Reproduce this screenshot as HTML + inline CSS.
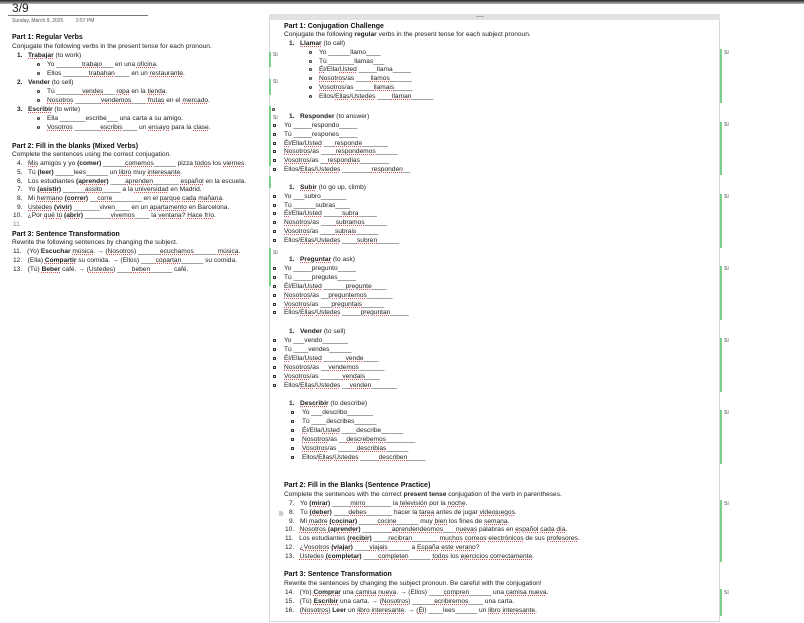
<!DOCTYPE html>
<html><head><meta charset="utf-8"><style>
*{margin:0;padding:0;box-sizing:border-box}
body{width:804px;height:623px;background:#fff;position:relative;overflow:hidden;font-family:"Liberation Sans",sans-serif;color:#222}
.l{position:absolute;font-size:6.6px;line-height:8px;white-space:nowrap}
.h{font-weight:bold;font-size:7px;color:#111}
.b{font-weight:bold}
.sp{text-decoration:underline dotted #e05050;text-decoration-thickness:1px;text-underline-offset:1px}
.bu{position:absolute;width:3px;height:3px;border:1px solid #333;border-radius:50%}
.sq{position:absolute;width:3px;height:3px;border:1px solid #333}
.g{position:absolute;width:2px;background:#7ccf8a}
.si{position:absolute;font-size:5px;color:#444;line-height:6px}
</style></head><body>
<div style="position:absolute;left:0;top:0;width:804px;height:4px;background:linear-gradient(#222,#bbb)"></div>
<div style="position:absolute;left:12px;top:2px;font-size:12px;line-height:13px;color:#222">3/9</div>
<div style="position:absolute;left:8px;top:15px;width:140px;height:1px;background:#777"></div>
<div class="l" style="left:12px;top:17px;font-size:5px;color:#555">Sunday, March 9, 2025 &nbsp; &nbsp; &nbsp; &nbsp; 2:57 PM</div>

<!-- Left column -->
<div class="l h" style="left:12px;top:34px">Part 1: Regular Verbs</div>
<div class="l" style="left:12px;top:43px">Conjugate the following verbs in the present tense for each pronoun.</div>
<div class="l" style="left:17px;top:52px"><b>1.</b>&nbsp;&nbsp;&nbsp;<b class="sp">Trabajar</b> (to work)</div>
<div class="bu" style="left:37px;top:63px"></div><div class="l" style="left:47px;top:61px">Yo _______<span class="sp">trabajo</span>___ en una <span class="sp">oficina</span>.</div>
<div class="bu" style="left:37px;top:72px"></div><div class="l" style="left:47px;top:70px">Ellos _______<span class="sp">trabahan</span>____ en un <span class="sp">restaurante</span>.</div>
<div class="l" style="left:17px;top:79px"><b>2.</b>&nbsp;&nbsp;&nbsp;<b>Vender</b> (to sell)</div>
<div class="bu" style="left:37px;top:90px"></div><div class="l" style="left:47px;top:88px">Tú _______<span class="sp">vendes</span>___ <span class="sp">ropa</span> en la <span class="sp">tienda</span>.</div>
<div class="bu" style="left:37px;top:99px"></div><div class="l" style="left:47px;top:97px"><span class="sp">Nosotros</span> _______<span class="sp">vendemos</span>____ <span class="sp">frutas</span> en el <span class="sp">mercado</span>.</div>
<div class="l" style="left:17px;top:106px"><b>3.</b>&nbsp;&nbsp;&nbsp;<b class="sp">Escribir</b> (to write)</div>
<div class="bu" style="left:37px;top:117px"></div><div class="l" style="left:47px;top:115px">Ella _______escribe___ una carta a su amigo.</div>
<div class="bu" style="left:37px;top:126px"></div><div class="l" style="left:47px;top:124px"><span class="sp">Vosotros</span> _______<span class="sp">escribis</span>____ un <span class="sp">ensayo</span> para la <span class="sp">clase</span>.</div>

<div class="l h" style="left:12px;top:143px">Part 2: Fill in the blanks (Mixed Verbs)</div>
<div class="l" style="left:12px;top:151px">Complete the sentences using the correct conjugation.</div>
<div class="l" style="left:17px;top:160px">4.&nbsp;&nbsp;&nbsp;<span class="sp">Mis</span> amigos y yo <b>(comer)</b> ______<span class="sp">comemos</span>______ pizza <span class="sp">todos</span> los <span class="sp">viernes</span>.</div>
<div class="l" style="left:17px;top:169px">5.&nbsp;&nbsp;&nbsp;Tú <b>(leer)</b> _____lees______ un <span class="sp">libro</span> muy <span class="sp">interesante</span>.</div>
<div class="l" style="left:17px;top:178px">6.&nbsp;&nbsp;&nbsp;Los estudiantes <b class="sp">(aprender)</b> ____<span class="sp">aprenden</span>_______ <span class="sp">español</span> en la escuela.</div>
<div class="l" style="left:17px;top:186px">7.&nbsp;&nbsp;&nbsp;Yo <b class="sp">(asistir)</b> ______<span class="sp">assito</span>_____ a la <span class="sp">universidad</span> en Madrid.</div>
<div class="l" style="left:17px;top:195px">8.&nbsp;&nbsp;&nbsp;Mi <span class="sp">hermano</span> <b class="sp">(correr)</b> __<span class="sp">corre</span>________ en el <span class="sp">parque</span> <span class="sp">cada</span> <span class="sp">mañana</span>.</div>
<div class="l" style="left:17px;top:204px">9.&nbsp;&nbsp;&nbsp;<span class="sp">Ustedes</span> <b class="sp">(vivir)</b> _______viven____ en un <span class="sp">apartamento</span> en Barcelona.</div>
<div class="l" style="left:13px;top:212px">10.&nbsp;&nbsp;&nbsp;¿Por <span class="sp">qué</span> <span class="sp">tú</span> <b class="sp">(abrir)</b> _______<span class="sp">vivemos</span>____ la <span class="sp">ventana</span>? <span class="sp">Hace</span> <span class="sp">frío</span>.</div>
<div class="l" style="left:13px;top:221px;color:#888">11.</div>
<div class="l h" style="left:12px;top:231px">Part 3: Sentence Transformation</div>
<div class="l" style="left:12px;top:239px">Rewrite the following sentences by changing the subject.</div>
<div class="l" style="left:13px;top:248px">11.&nbsp;&nbsp;&nbsp;(Yo) <b>Escuchar</b> <span class="sp">música</span>. → (<span class="sp">Nosotros</span>) ______<span class="sp">ecuchamos</span>______ <span class="sp">música</span>.</div>
<div class="l" style="left:13px;top:257px">12.&nbsp;&nbsp;&nbsp;(Ella) <b class="sp">Compartir</b> su comida. → (Ellos) ____<span class="sp">copartan</span>______ su comida.</div>
<div class="l" style="left:13px;top:266px">13.&nbsp;&nbsp;&nbsp;(Tú) <b class="sp">Beber</b> café. → (<span class="sp">Ustedes</span>) ____<span class="sp">beben</span>______ café.</div>

<!-- Right panel -->
<div style="position:absolute;left:269px;top:14px;width:451px;height:608px;border-left:1px solid #d8d8d8;border-right:1px solid #d8d8d8;border-bottom:1px solid #d8d8d8"></div>
<div style="position:absolute;left:269px;top:14px;width:451px;height:6px;background:#e2e2e2"></div>
<div style="position:absolute;left:476px;top:16px;width:8px;height:1px;background:#aaa"></div>

<div class="l h" style="left:284px;top:23px">Part 1: Conjugation Challenge</div>
<div class="l" style="left:284px;top:31px">Conjugate the following <b>regular</b> verbs in the present tense for each subject pronoun.</div>
<div class="l" style="left:289px;top:40px"><b>1.</b>&nbsp;&nbsp;&nbsp;<b class="sp">Llamar</b> (to call)</div>
<div class="bu" style="left:309px;top:51px"></div><div class="l" style="left:319px;top:49px">Yo ______llamo____</div>
<div class="bu" style="left:309px;top:60px"></div><div class="l" style="left:319px;top:58px">Tú _______llamas___</div>
<div class="bu" style="left:309px;top:68px"></div><div class="l" style="left:319px;top:66px"><span class="sp">Él</span>/Ella/<span class="sp">Usted</span> _____llama_____</div>
<div class="bu" style="left:309px;top:77px"></div><div class="l" style="left:319px;top:75px"><span class="sp">Nosotros</span>/as ____<span class="sp">llamos</span>______</div>
<div class="bu" style="left:309px;top:86px"></div><div class="l" style="left:319px;top:84px"><span class="sp">Vosotros</span>/as _____<span class="sp">llamais</span>_____</div>
<div class="bu" style="left:309px;top:95px"></div><div class="l" style="left:319px;top:93px">Ellos/<span class="sp">Ellas</span>/<span class="sp">Ustedes</span> ____<span class="sp">llaman</span>______</div>
<div class="bu" style="left:272px;top:108px"></div>

<div class="l" style="left:289px;top:113px"><b>1.</b>&nbsp;&nbsp;&nbsp;<b>Responder</b> (to answer)</div>
<div class="sq" style="left:273px;top:124px"></div><div class="l" style="left:284px;top:122px">Yo _____respondo_____</div>
<div class="sq" style="left:273px;top:133px"></div><div class="l" style="left:284px;top:131px">Tú _____respones_____</div>
<div class="sq" style="left:273px;top:142px"></div><div class="l" style="left:284px;top:140px"><span class="sp">Él</span>/Ella/<span class="sp">Usted</span> ___<span class="sp">responde</span>_______</div>
<div class="sq" style="left:273px;top:150px"></div><div class="l" style="left:284px;top:148px"><span class="sp">Nosotros</span>/as ____<span class="sp">respondemos</span>______</div>
<div class="sq" style="left:273px;top:159px"></div><div class="l" style="left:284px;top:157px"><span class="sp">Vosotros</span>/as __<span class="sp">respondias</span>________</div>
<div class="sq" style="left:273px;top:168px"></div><div class="l" style="left:284px;top:166px">Ellos/<span class="sp">Ellas</span>/<span class="sp">Ustedes</span> ________<span class="sp">responden</span>__</div>

<div class="l" style="left:289px;top:184px"><b>1.</b>&nbsp;&nbsp;&nbsp;<b class="sp">Subir</b> (to go up, climb)</div>
<div class="sq" style="left:273px;top:195px"></div><div class="l" style="left:284px;top:193px">Yo ___subro_______</div>
<div class="sq" style="left:273px;top:204px"></div><div class="l" style="left:284px;top:202px">Tú ______subras____</div>
<div class="sq" style="left:273px;top:212px"></div><div class="l" style="left:284px;top:210px"><span class="sp">Él</span>/Ella/<span class="sp">Usted</span> _____<span class="sp">subra</span>_____</div>
<div class="sq" style="left:273px;top:221px"></div><div class="l" style="left:284px;top:219px"><span class="sp">Nosotros</span>/as ____<span class="sp">subramos</span>______</div>
<div class="sq" style="left:273px;top:230px"></div><div class="l" style="left:284px;top:228px"><span class="sp">Vosotros</span>/as ____<span class="sp">subrais</span>______</div>
<div class="sq" style="left:273px;top:239px"></div><div class="l" style="left:284px;top:237px">Ellos/<span class="sp">Ellas</span>/<span class="sp">Ustedes</span> ____<span class="sp">subren</span>______</div>

<div class="l" style="left:289px;top:256px"><b>1.</b>&nbsp;&nbsp;&nbsp;<b class="sp">Preguntar</b> (to ask)</div>
<div class="sq" style="left:273px;top:267px"></div><div class="l" style="left:284px;top:265px">Yo _____pregunto_____</div>
<div class="sq" style="left:273px;top:276px"></div><div class="l" style="left:284px;top:274px">Tú _____pregutes_____</div>
<div class="sq" style="left:273px;top:285px"></div><div class="l" style="left:284px;top:283px"><span class="sp">Él</span>/Ella/<span class="sp">Usted</span> ______<span class="sp">pregunte</span>____</div>
<div class="sq" style="left:273px;top:294px"></div><div class="l" style="left:284px;top:292px"><span class="sp">Nosotros</span>/as __<span class="sp">preguntemos</span>_______</div>
<div class="sq" style="left:273px;top:303px"></div><div class="l" style="left:284px;top:301px"><span class="sp">Vosotros</span>/as ___<span class="sp">preguntais</span>______</div>
<div class="sq" style="left:273px;top:311px"></div><div class="l" style="left:284px;top:309px">Ellos/<span class="sp">Ellas</span>/<span class="sp">Ustedes</span> _____<span class="sp">preguntan</span>_____</div>

<div class="l" style="left:289px;top:328px"><b>1.</b>&nbsp;&nbsp;&nbsp;<b>Vender</b> (to sell)</div>
<div class="sq" style="left:273px;top:339px"></div><div class="l" style="left:284px;top:337px">Yo ___vendo_______</div>
<div class="sq" style="left:273px;top:348px"></div><div class="l" style="left:284px;top:346px">Tú ____vendes______</div>
<div class="sq" style="left:273px;top:357px"></div><div class="l" style="left:284px;top:355px"><span class="sp">Él</span>/Ella/<span class="sp">Usted</span> ______<span class="sp">vende</span>____</div>
<div class="sq" style="left:273px;top:366px"></div><div class="l" style="left:284px;top:364px"><span class="sp">Nosotros</span>/as __<span class="sp">vendemos</span>_______</div>
<div class="sq" style="left:273px;top:375px"></div><div class="l" style="left:284px;top:373px"><span class="sp">Vosotros</span>/as ______<span class="sp">vendais</span>____</div>
<div class="sq" style="left:273px;top:384px"></div><div class="l" style="left:284px;top:382px">Ellos/<span class="sp">Ellas</span>/<span class="sp">Ustedes</span> __<span class="sp">venden</span>_______</div>

<div class="l" style="left:289px;top:400px"><b>1.</b>&nbsp;&nbsp;&nbsp;<b class="sp">Describir</b> (to describe)</div>
<div class="sq" style="left:291px;top:411px"></div><div class="l" style="left:302px;top:409px">Yo ___describo_______</div>
<div class="sq" style="left:291px;top:420px"></div><div class="l" style="left:302px;top:418px">Tú ____describes______</div>
<div class="sq" style="left:291px;top:429px"></div><div class="l" style="left:302px;top:427px"><span class="sp">Él</span>/Ella/<span class="sp">Usted</span> ____describe______</div>
<div class="sq" style="left:291px;top:438px"></div><div class="l" style="left:302px;top:436px"><span class="sp">Nosotros</span>/as __<span class="sp">descrebemos</span>________</div>
<div class="sq" style="left:291px;top:447px"></div><div class="l" style="left:302px;top:445px"><span class="sp">Vosotros</span>/as _____<span class="sp">describias</span>______</div>
<div class="sq" style="left:291px;top:456px"></div><div class="l" style="left:302px;top:454px">Ellos/<span class="sp">Ellas</span>/<span class="sp">Ustedes</span> _____<span class="sp">describen</span>_____</div>

<div class="l h" style="left:284px;top:482px">Part 2: Fill in the Blanks (Sentence Practice)</div>
<div class="l" style="left:284px;top:491px">Complete the sentences with the correct <b>present tense</b> conjugation of the verb in parentheses.</div>
<div class="l" style="left:289px;top:500px">7.&nbsp;&nbsp;&nbsp;Yo <b class="sp">(mirar)</b> _____<span class="sp">mirro</span>_______ la <span class="sp">televisión</span> por la <span class="sp">noche</span>.</div>
<div style="position:absolute;left:279px;top:511px;width:5px;height:5px;background:#ccc;clip-path:polygon(0 0,60% 0,100% 50%,60% 100%,0 100%)"></div>
<div class="l" style="left:289px;top:509px">8.&nbsp;&nbsp;&nbsp;Tú <b class="sp">(deber)</b> ____<span class="sp">debes</span>_______ hacer la <span class="sp">tarea</span> antes de jugar <span class="sp">videojuegos</span>.</div>
<div class="l" style="left:289px;top:518px">9.&nbsp;&nbsp;&nbsp;Mi <span class="sp">madre</span> <b class="sp">(cocinar)</b> _____<span class="sp">cocine</span>______ muy <span class="sp">bien</span> los fines de <span class="sp">semana</span>.</div>
<div class="l" style="left:285px;top:526px">10.&nbsp;&nbsp;&nbsp;<span class="sp">Nosotros</span> <b class="sp">(aprender)</b> ________<span class="sp">aprendendeomos</span>___ <span class="sp">nuevas</span> palabras en <span class="sp">español</span> <span class="sp">cada</span> <span class="sp">día</span>.</div>
<div class="l" style="left:285px;top:535px">11.&nbsp;&nbsp;&nbsp;Los estudiantes <b class="sp">(recibir)</b> ____<span class="sp">recibran</span>_______ <span class="sp">muchos</span> <span class="sp">correos</span> <span class="sp">electrónicos</span> de sus <span class="sp">profesores</span>.</div>
<div class="l" style="left:285px;top:544px">12.&nbsp;&nbsp;&nbsp;¿<span class="sp">Vosotros</span> <b class="sp">(viajar)</b> ____<span class="sp">viajais</span>______ a <span class="sp">España</span> <span class="sp">este</span> <span class="sp">verano</span>?</div>
<div class="l" style="left:285px;top:553px">13.&nbsp;&nbsp;&nbsp;<span class="sp">Ustedes</span> <b class="sp">(completar)</b> ____<span class="sp">completen</span>______ <span class="sp">todos</span> los <span class="sp">ejercicios</span> <span class="sp">correctamente</span>.</div>

<div class="l h" style="left:284px;top:571px">Part 3: Sentence Transformation</div>
<div class="l" style="left:284px;top:580px">Rewrite the sentences by changing the subject pronoun. Be careful with the conjugation!</div>
<div class="l" style="left:285px;top:589px">14.&nbsp;&nbsp;&nbsp;(Yo) <b class="sp">Comprar</b> una <span class="sp">camisa</span> <span class="sp">nueva</span>. → (Ellos) ____<span class="sp">compren</span>______ una <span class="sp">camisa</span> <span class="sp">nueva</span>.</div>
<div class="l" style="left:285px;top:598px">15.&nbsp;&nbsp;&nbsp;(Tú) <b class="sp">Escribir</b> una carta. → (<span class="sp">Nosotros</span>) ______<span class="sp">ecribiremos</span>____ una carta.</div>
<div class="l" style="left:285px;top:607px">16.&nbsp;&nbsp;&nbsp;(<span class="sp">Nosotros</span>) <b>Leer</b> un <span class="sp">libro</span> <span class="sp">interesante</span>. → (<span class="sp">Él</span>) ____lees______ un <span class="sp">libro</span> <span class="sp">interesante</span>.</div>

<!-- left-edge green markers -->
<div class="g" style="left:269px;top:52px;height:15px"></div><div class="si" style="left:273px;top:52px">Sí</div>
<div class="g" style="left:269px;top:79px;height:16px"></div><div class="si" style="left:273px;top:79px">Sí</div>
<div class="g" style="left:269px;top:106px;height:60px"></div><div class="si" style="left:273px;top:115px">Sí</div>
<div class="g" style="left:269px;top:176px;height:12px"></div>
<div class="g" style="left:269px;top:248px;height:38px"></div><div class="si" style="left:273px;top:250px">Sí</div>

<!-- right-edge green markers -->
<div class="g" style="left:720px;top:49px;height:54px"></div><div class="si" style="left:724px;top:50px">Sí</div>
<div class="g" style="left:720px;top:122px;height:53px"></div><div class="si" style="left:724px;top:122px">Sí</div>
<div class="g" style="left:720px;top:194px;height:54px"></div><div class="si" style="left:724px;top:194px">Sí</div>
<div class="g" style="left:720px;top:266px;height:54px"></div><div class="si" style="left:724px;top:266px">Sí</div>
<div class="g" style="left:720px;top:338px;height:54px"></div><div class="si" style="left:724px;top:338px">Sí</div>
<div class="g" style="left:720px;top:410px;height:54px"></div><div class="si" style="left:724px;top:410px">Sí</div>
<div class="g" style="left:720px;top:500px;height:62px"></div><div class="si" style="left:724px;top:501px">Sí</div>
<div class="g" style="left:720px;top:589px;height:27px"></div><div class="si" style="left:724px;top:590px">Sí</div>
</body></html>
